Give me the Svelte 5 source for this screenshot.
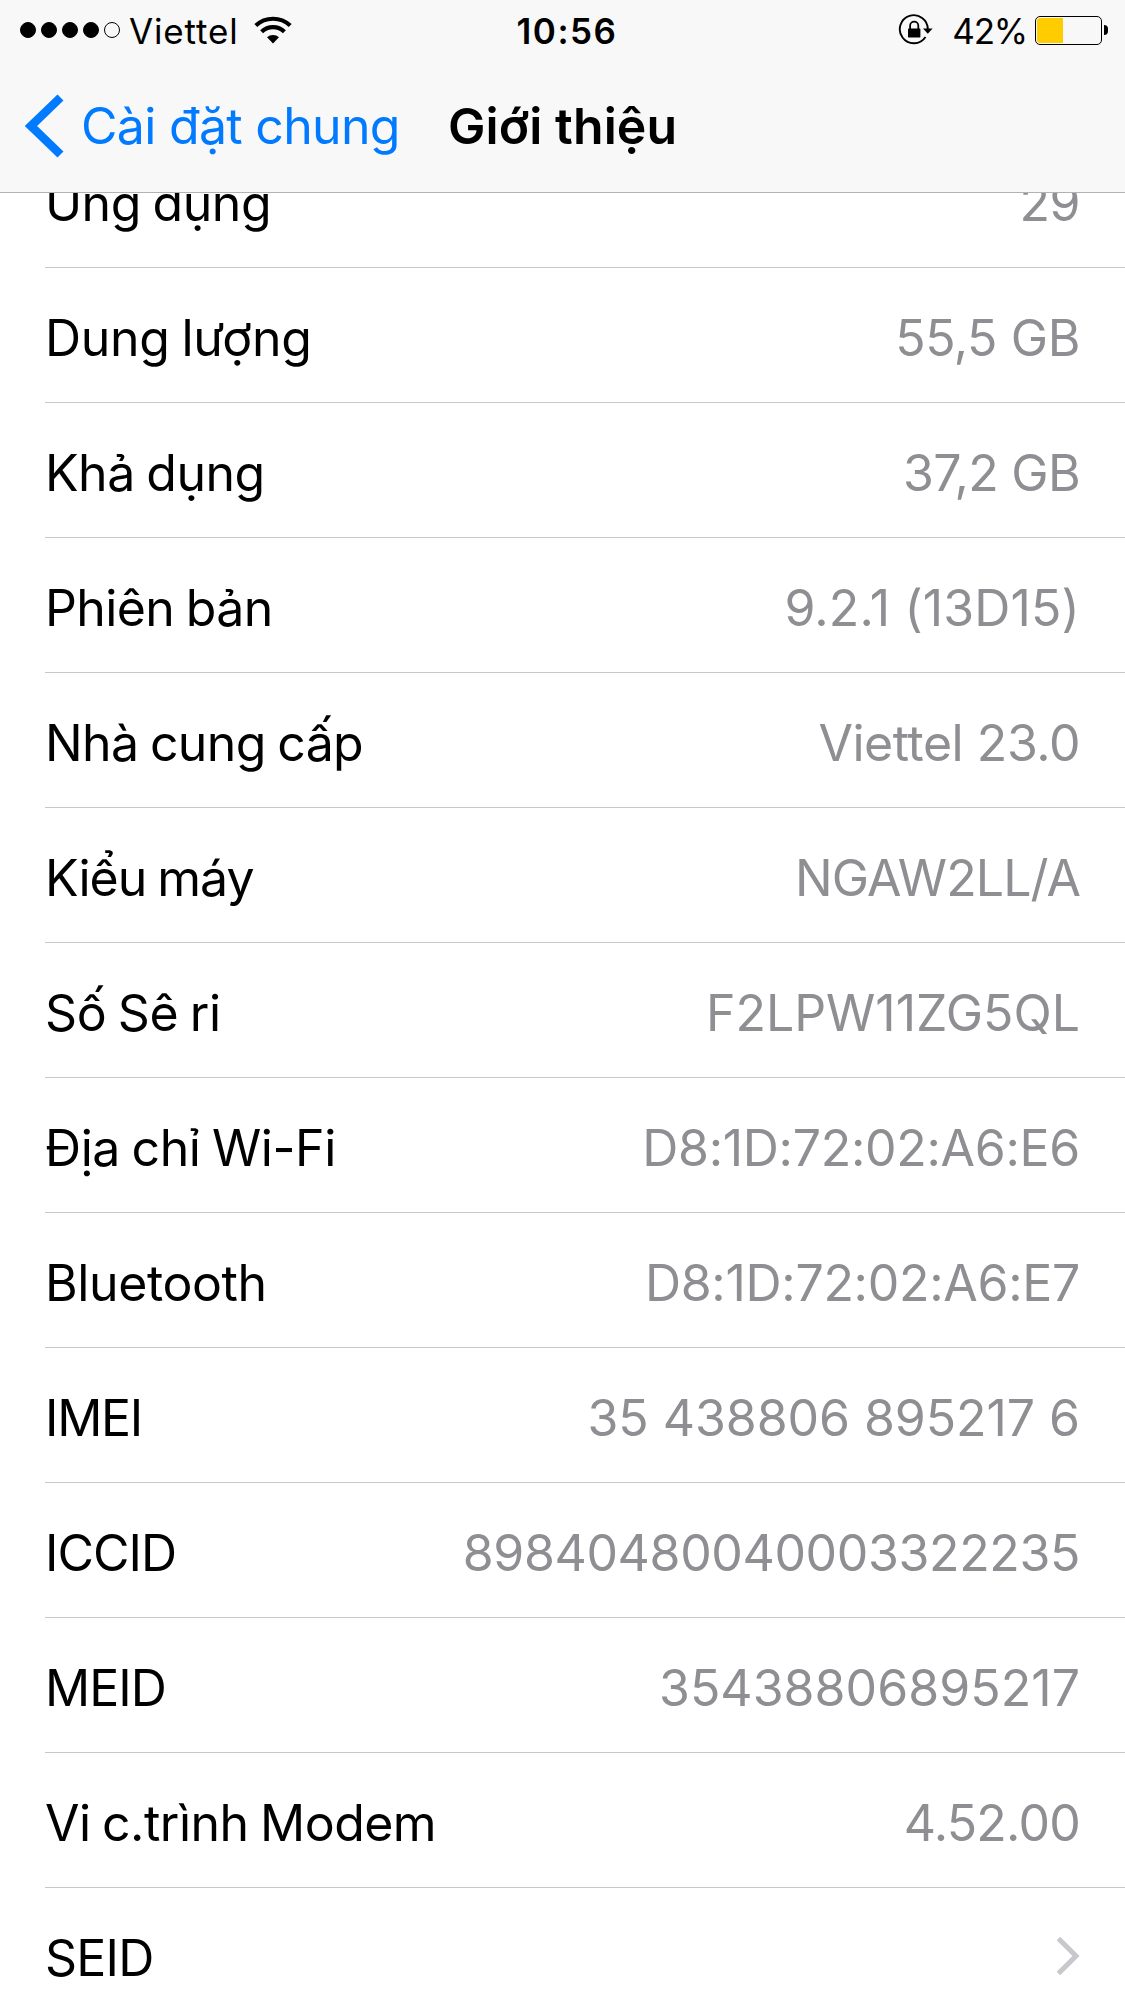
<script>
  const signal = [true, true, true, true, false];
  const battery = 42;

  // tracking: letter spacing in px for [label, value]
  const rows = [
    { label: 'Ứng dụng', value: '29', tracking: [-0.45, -0.5] },
    { label: 'Dung lượng', value: '55,5 GB', tracking: [-0.28, -0.4] },
    { label: 'Khả dụng', value: '37,2 GB', tracking: [-0.5, -0.7] },
    { label: 'Phiên bản', value: '9.2.1 (13D15)', tracking: [-0.6, 0.15] },
    { label: 'Nhà cung cấp', value: 'Viettel 23.0', tracking: [-0.62, -0.45] },
    { label: 'Kiểu máy', value: 'NGAW2LL/A', tracking: [-1, -0.9] },
    { label: 'Số Sê ri', value: 'F2LPW11ZG5QL', tracking: [-0.43, 0] },
    { label: 'Địa chỉ Wi-Fi', value: 'D8:1D:72:02:A6:E6', tracking: [-0.45, -0.3] },
    { label: 'Bluetooth', value: 'D8:1D:72:02:A6:E7', tracking: [-0.4, -0.3] },
    { label: 'IMEI', value: '35 438806 895217 6', tracking: [-1.3, -0.06] },
    { label: 'ICCID', value: '89840480040003322235', tracking: [-1, -0.36] },
    { label: 'MEID', value: '35438806895217', tracking: [-1, 0.05] },
    { label: 'Vi c.trình Modem', value: '4.52.00', tracking: [-0.53, -0.75] },
    { label: 'SEID', link: true, tracking: [-0.8, 0] }
  ];
</script>

<div class="screen">
  <header>
    <div class="status-bar">
      <div class="carrier">
        <div class="signal">
          {#each signal as on}
            <span class="dot" class:on></span>
          {/each}
        </div>
        <span class="carrier-name">Viettel</span>
        <svg class="wifi" width="38" height="28" viewBox="0 0 38 28">
          <g fill="none" stroke="#000" stroke-width="4.2">
            <path d="M1.8 9.6 A25 25 0 0 1 36.2 9.6" />
            <path d="M7.6 15.8 A16.4 16.4 0 0 1 30.4 15.8" />
          </g>
          <path d="M13 21.2 A9 9 0 0 1 25 21.2 L19 27.4 Z" fill="#000" />
        </svg>
      </div>
      <span class="time">10:56</span>
      <div class="power">
        <svg class="lock" width="36" height="32" viewBox="0 0 36 32">
          <path d="M27.5 22.9 A14 14 0 1 1 29.8 15.5" fill="none" stroke="#000" stroke-width="1.9" />
          <path d="M25 14.6 H34.6 L29.8 19.8 Z" fill="#000" />
          <path d="M12.1 16 V11.8 A4.1 4.1 0 0 1 20.3 11.8 V16" fill="none" stroke="#000" stroke-width="1.8" />
          <rect x="10" y="14.6" width="12.4" height="9" rx="0.8" fill="#000" />
        </svg>
        <span class="percent">{battery}%</span>
        <div class="battery">
          <div class="level" style={`width: ${battery}%`}></div>
        </div>
        <span class="nub"></span>
      </div>
    </div>

    <nav>
      <div class="back">
        <svg width="40" height="64" viewBox="0 0 40 64">
          <path d="M35.5 3.5 L6 32 L35.5 60.5" fill="none" stroke="#007aff" stroke-width="8.6" />
        </svg>
        <span>Cài đặt chung</span>
      </div>
      <h1>Giới thiệu</h1>
    </nav>
  </header>

  <ul>
    {#each rows as row}
      <li>
        <span class="label" style={`letter-spacing: ${row.tracking[0]}px`}>{row.label}</span>
        {#if row.link}
          <svg class="chevron" width="24" height="40" viewBox="0 0 24 40">
            <path d="M2.4 2.4 L20 20 L2.4 37.6" fill="none" stroke="#c7c7cc" stroke-width="5" />
          </svg>
        {:else}
          <span class="value" style={`letter-spacing: ${row.tracking[1]}px`}>{row.value}</span>
        {/if}
      </li>
    {/each}
  </ul>
</div>

<style>
  :global(body) {
    margin: 0;
    background: #fff;
  }

  .screen {
    width: 1125px;
    height: 2001px;
    overflow: hidden;
    background: #fff;
    color: #000;
    font-family: Inter, 'Liberation Sans', sans-serif;
    font-size: 50px;
  }

  header {
    position: relative;
    z-index: 1;
    box-sizing: border-box;
    height: 193px;
    background: #f8f8f8;
    border-bottom: 1px solid #b2b2b2;
  }

  .status-bar {
    display: grid;
    grid-template-columns: 1fr auto 1fr;
    align-items: center;
    height: 60px;
    padding: 0 17px 0 20px;
    font-size: 35px;
    line-height: 1;
  }

  .carrier,
  .power,
  .signal {
    display: flex;
    align-items: center;
  }

  .signal {
    gap: 5px;
  }

  .dot {
    box-sizing: border-box;
    width: 16px;
    height: 16px;
    border: 1px solid #000;
    border-radius: 50%;
  }

  .dot.on {
    background: #000;
  }

  .carrier-name {
    padding-top: 2px;
    margin-left: 9px;
    letter-spacing: 0.85px;
  }

  .wifi {
    margin-left: 15px;
  }

  .time {
    padding: 2px 0 0 6px;
    font-weight: 600;
    letter-spacing: 1.5px;
  }

  .power {
    justify-content: flex-end;
  }

  .percent {
    padding-top: 2px;
    margin: 0 8px 0 18px;
    letter-spacing: -1.2px;
  }

  .battery {
    box-sizing: border-box;
    width: 67px;
    height: 29px;
    padding: 1px;
    border: 1px solid #000;
    border-radius: 5px;
  }

  .level {
    height: 25px;
    border-radius: 3px 0 0 3px;
    background: #ffcc00;
  }

  .nub {
    width: 4px;
    height: 10px;
    margin-left: 2px;
    border-radius: 0 4px 4px 0;
    background: #000;
  }

  nav {
    display: flex;
    align-items: center;
    height: 132px;
  }

  .back {
    display: flex;
    align-items: center;
    width: 448px;
    padding-left: 25px;
    box-sizing: border-box;
    color: #007aff;
    white-space: nowrap;
  }

  .back span {
    margin-left: 16px;
    letter-spacing: -0.7px;
  }

  h1 {
    margin: 0;
    font-size: 50px;
    font-weight: 600;
    letter-spacing: 0.1px;
    white-space: nowrap;
  }

  ul {
    margin: -60px 0 0;
    padding: 0 0 0 45px;
    list-style: none;
  }

  li {
    box-sizing: border-box;
    display: flex;
    align-items: center;
    justify-content: space-between;
    height: 135px;
    padding: 6px 45px 0 0;
    border-bottom: 1px solid #c8c7cc;
    white-space: nowrap;
  }

  .label {
    word-spacing: -2px;
  }

  .value {
    color: #8e8e93;
  }

  .chevron {
    margin-bottom: 5px;
  }
</style>
